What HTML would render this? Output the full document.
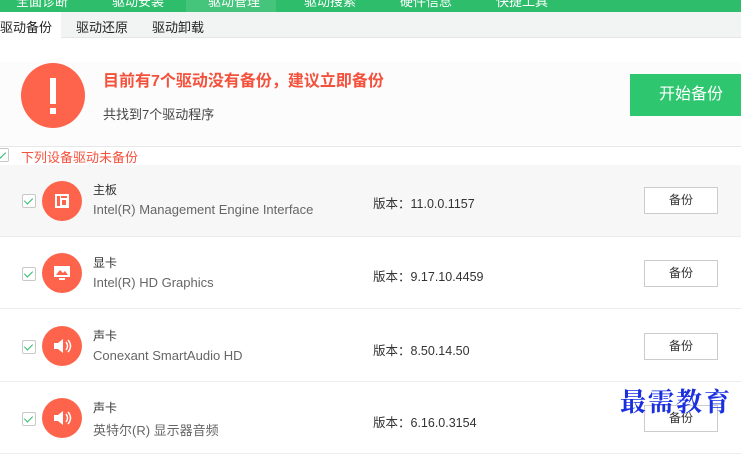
<!DOCTYPE html>
<html><head><meta charset="utf-8"><style>
*{margin:0;padding:0;box-sizing:border-box}
body{width:741px;height:430px;overflow:hidden;background:#fff;font-family:"Liberation Sans","Noto Sans CJK SC",sans-serif;position:relative}
.a{position:absolute;white-space:nowrap}
.top{left:0;top:0;width:741px;height:12px;background:#2dbd6b;overflow:hidden}
.top .act{position:absolute;left:186px;top:0;width:90px;height:12px;background:#45c47c}
.top span{position:absolute;top:-9px;font-size:13px;color:#fff}
.tabs{left:0;top:12px;width:741px;height:26px;background:#f2f3f3;border-bottom:1px solid #e6e6e6;font-size:13px;color:#222}
.tabs span{position:absolute;top:5px}
.hdr{left:0;top:62px;width:741px;height:85px;background:#fcfcfc;border-bottom:1px solid #e8e8e8}
.cb{width:14px;height:14px;border:1px solid #c8c8c8;background:#fff;border-radius:2px}
.cb:after{content:"";position:absolute;left:3px;top:1px;width:4px;height:7px;border:solid #2dbd6b;border-width:0 1.5px 1.5px 0;transform:rotate(45deg)}
.row{left:0;width:741px;height:72px;border-bottom:1px solid #ececec}
.ic{width:40px;height:40px;border-radius:50%;background:#fe634b}
.nm{font-size:12px;color:#333}
.ds{font-size:13px;color:#666}
.vr{font-size:12.5px;color:#333}
.bt{width:74px;height:27px;border:1px solid #ccc;background:#fff;font-size:12px;color:#333;text-align:center;line-height:25px}
</style></head><body>
<div class="a top"><div class="act"></div><span style="left:16px">全面诊断</span><span style="left:112px">驱动安装</span><span style="left:208px">驱动管理</span><span style="left:304px">驱动搜索</span><span style="left:400px">硬件信息</span><span style="left:496px">快捷工具</span></div>
<div class="a tabs"><span style="left:0;top:0;height:26px;width:61px;background:#fff;padding-top:5px">驱动备份</span><span style="left:76px">驱动还原</span><span style="left:152px">驱动卸载</span></div>
<div class="a hdr"></div>
<div class="a" style="left:21px;top:63px;width:64px;height:65px;border-radius:50%;background:#fe634b"></div>
<div class="a" style="left:50px;top:78px;width:6px;height:26px;background:#fff"></div>
<div class="a" style="left:50px;top:108px;width:6px;height:6px;background:#fff"></div>
<div class="a" style="left:103px;top:67px;font-size:16px;font-weight:bold;color:#f4513c">目前有7个驱动没有备份，建议立即备份</div>
<div class="a" style="left:103px;top:104px;font-size:13px;color:#444">共找到7个驱动程序</div>
<div class="a" style="left:630px;top:74px;width:111px;height:42px;background:#2ec76f;color:#fff;font-size:16px;line-height:42px;padding-left:29px">开始备份</div>
<div class="a cb" style="left:-5px;top:148px"></div>
<div class="a" style="left:21px;top:147px;font-size:13px;color:#f4513c">下列设备驱动未备份</div>

<div class="a row" style="top:165px;background:#f7f7f7"></div>
<div class="a row" style="top:237px"></div>
<div class="a row" style="top:310px"></div>
<div class="a row" style="top:382px"></div>

<div class="a cb" style="left:22px;top:194px"></div>
<div class="a ic" style="left:42px;top:181px"><svg width="40" height="40"><rect x="13" y="13" width="14" height="14" fill="#fff"/><rect x="15" y="15" width="3" height="10" fill="#fe634b"/><rect x="19" y="15" width="6" height="2" fill="#fe634b"/><rect x="20" y="19" width="4" height="5" fill="#fe634b"/></svg></div>
<div class="a nm" style="left:93px;top:181px">主板</div>
<div class="a ds" style="left:93px;top:202px">Intel(R) Management Engine Interface</div>
<div class="a vr" style="left:373px;top:193px">版本：11.0.0.1157</div>
<div class="a bt" style="left:644px;top:187px">备份</div>

<div class="a cb" style="left:22px;top:267px"></div>
<div class="a ic" style="left:42px;top:253px"><svg width="40" height="40"><rect x="12" y="13" width="16" height="11" fill="#fff"/><path d="M14 22l4-5 3 3 2-2 3 4z" fill="#fe634b"/><rect x="17" y="25" width="6" height="2" fill="#fff"/></svg></div>
<div class="a nm" style="left:93px;top:254px">显卡</div>
<div class="a ds" style="left:93px;top:275px">Intel(R) HD Graphics</div>
<div class="a vr" style="left:373px;top:266px">版本：9.17.10.4459</div>
<div class="a bt" style="left:644px;top:260px">备份</div>

<div class="a cb" style="left:22px;top:340px"></div>
<div class="a ic" style="left:42px;top:326px"><svg width="40" height="40"><path d="M12 17h4l5-4v14l-5-4h-4z" fill="#fff"/><path d="M24 16q3 4 0 8M26 14q5 6 0 12" stroke="#fff" stroke-width="1.5" fill="none"/></svg></div>
<div class="a nm" style="left:93px;top:327px">声卡</div>
<div class="a ds" style="left:93px;top:348px">Conexant SmartAudio HD</div>
<div class="a vr" style="left:373px;top:340px">版本：8.50.14.50</div>
<div class="a bt" style="left:644px;top:333px">备份</div>

<div class="a cb" style="left:22px;top:412px"></div>
<div class="a ic" style="left:42px;top:398px"><svg width="40" height="40"><path d="M12 17h4l5-4v14l-5-4h-4z" fill="#fff"/><path d="M24 16q3 4 0 8M26 14q5 6 0 12" stroke="#fff" stroke-width="1.5" fill="none"/></svg></div>
<div class="a nm" style="left:93px;top:399px">声卡</div>
<div class="a ds" style="left:93px;top:420px">英特尔(R) 显示器音频</div>
<div class="a vr" style="left:373px;top:412px">版本：6.16.0.3154</div>
<div class="a bt" style="left:644px;top:405px">备份</div>

<div class="a" style="left:620px;top:382px;font-size:26px;font-weight:bold;color:#1a2fe0;font-family:'Noto Serif CJK SC','Noto Serif CJK JP',serif;letter-spacing:2px">最需教育</div>
</body></html>
